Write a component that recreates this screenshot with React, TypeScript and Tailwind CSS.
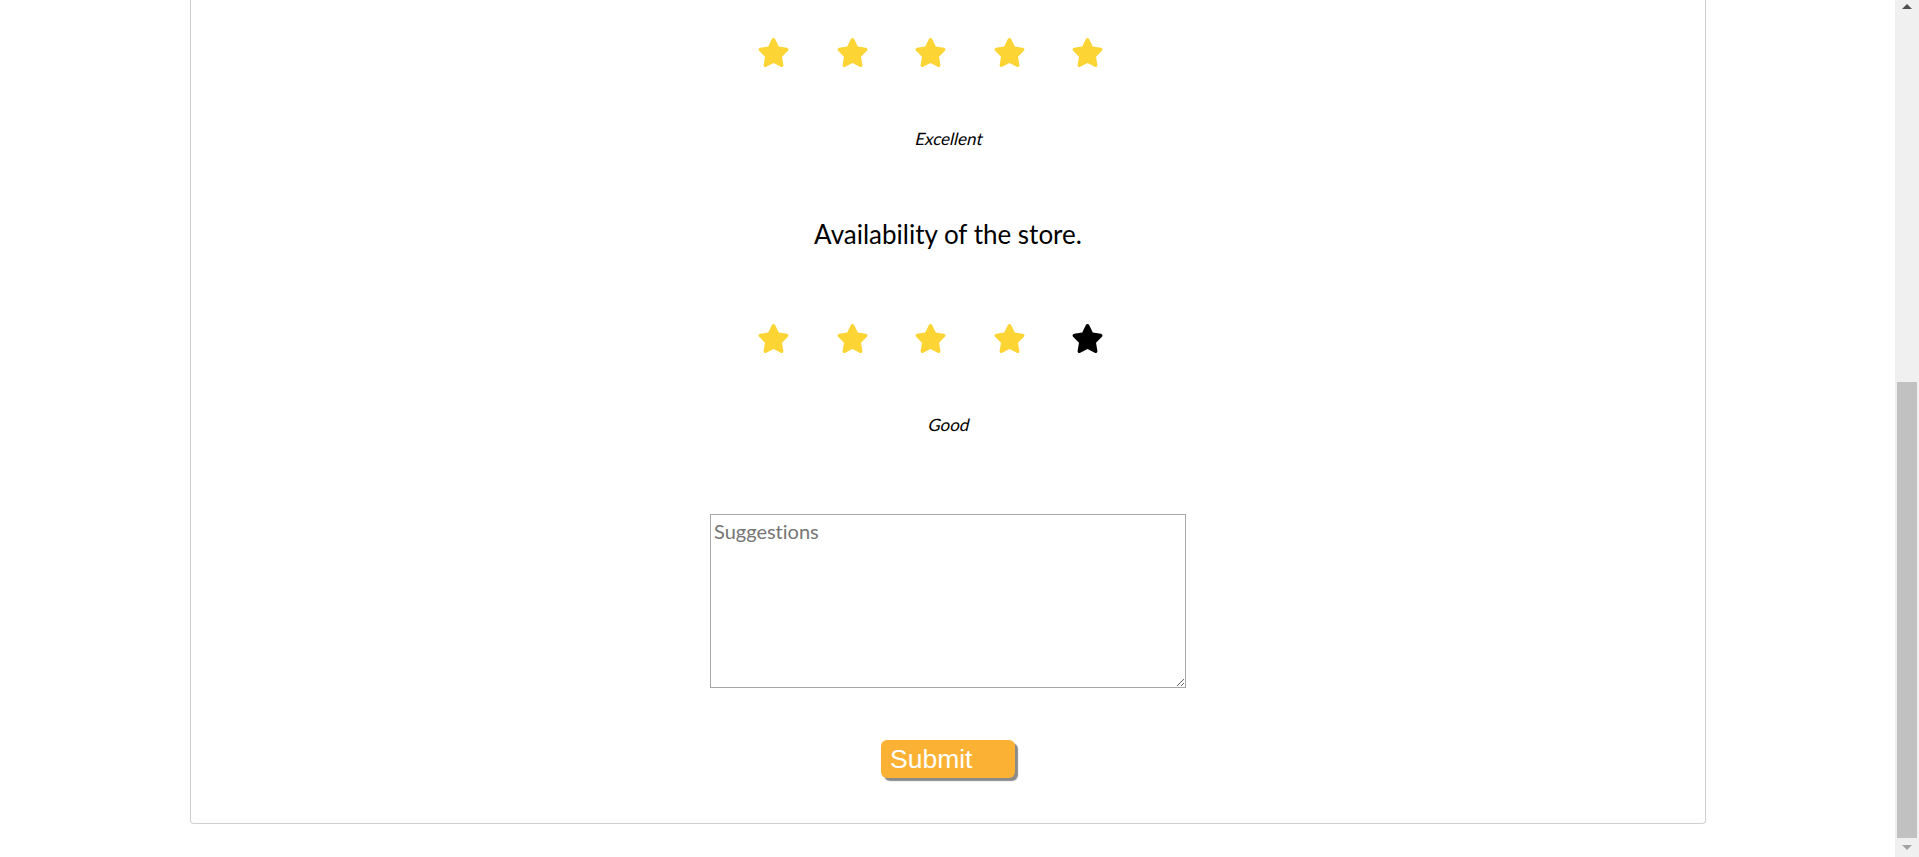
import React from "react";

const StarIcon = ({ color }: { color: string }) => (
  <svg viewBox="0 0 576 512" width="33" height="29" fill={color} className="block">
    <path d="M316.9 18C311.6 7 300.4 0 288.1 0s-23.4 7-28.8 18L195 150.3 51.4 171.5c-12 1.8-22 10.2-25.7 21.7s-.7 24.2 7.9 32.7L137.8 329 113.2 474.7c-2 12 3 24.2 12.9 31.3s23 8 33.8 2.3l128.3-68.5 128.3 68.5c10.8 5.7 23.9 4.9 33.8-2.3s14.9-19.3 12.9-31.3L438.5 329 542.7 225.9c8.6-8.5 11.7-21.2 7.9-32.7s-13.7-19.9-25.7-21.7L381.2 150.3 316.9 18z" />
  </svg>
);

const StarRow = ({ filled }: { filled: number }) => (
  <div className="flex h-[29px] items-center gap-[45.5px] pr-[35px]">
    {[1, 2, 3, 4, 5].map((i) => (
      <StarIcon key={i} color={i <= filled ? "#fcd535" : "#000000"} />
    ))}
  </div>
);

export default function App() {
  return (
    <div className="flex h-[857px] w-full overflow-hidden bg-white font-['Lato','Noto_Sans',sans-serif] text-black [font-variant-ligatures:none]">
      <div className="flex-1">
        <div className="ml-[190px] flex w-[1516px] flex-col items-center rounded-b-[4px] border-x border-b border-[#cfcfcf] pt-[38px] pb-[45px]">
          <StarRow filled={5} />
          <p className="mt-[62px] inline-block origin-[center_17px] -skew-x-[13deg] text-[17px] leading-[20px]">Excellent</p>
          <h2 className="mt-[70px] text-[26px] leading-[31px]">Availability of the store.</h2>
          <div className="mt-[74px]">
            <StarRow filled={4} />
          </div>
          <p className="mt-[62px] inline-block origin-[center_17px] -skew-x-[13deg] text-[17px] leading-[20px]">Good</p>
          <textarea
            placeholder="Suggestions"
            className="mt-[79px] h-[174px] w-[476px] border border-[#a9a9a9] bg-white px-[3px] pt-[4px] text-[20px] leading-[24px] text-black outline-none [font-variant-ligatures:none] placeholder:text-[#757575]"
          />
          <button
            type="button"
            className="mt-[52px] flex h-[38px] w-[134px] items-center rounded-[6px] bg-[#fbb234] pb-[1px] pl-[9px] text-left font-['Liberation_Sans',Arial,sans-serif] text-[26.5px] leading-[30px] text-white shadow-[3px_3px_1px_#8a8a8a]"
          >
            Submit
          </button>
        </div>
      </div>
      <div className="flex h-full w-[24px] flex-col bg-[#f0f0f0]">
        <div className="flex h-[17px] items-start justify-center pt-[4px]">
          <div className="h-0 w-0 border-x-[5px] border-b-[5px] border-x-transparent border-b-[#505050]" />
        </div>
        <div className="flex flex-1 flex-col px-[2px]">
          <div className="h-[365px]" />
          <div className="flex-1 bg-[#c1c1c1]" />
        </div>
        <div className="flex h-[19px] items-center justify-center">
          <div className="h-0 w-0 border-x-[5px] border-t-[5px] border-x-transparent border-t-[#a3a3a3]" />
        </div>
      </div>
    </div>
  );
}
